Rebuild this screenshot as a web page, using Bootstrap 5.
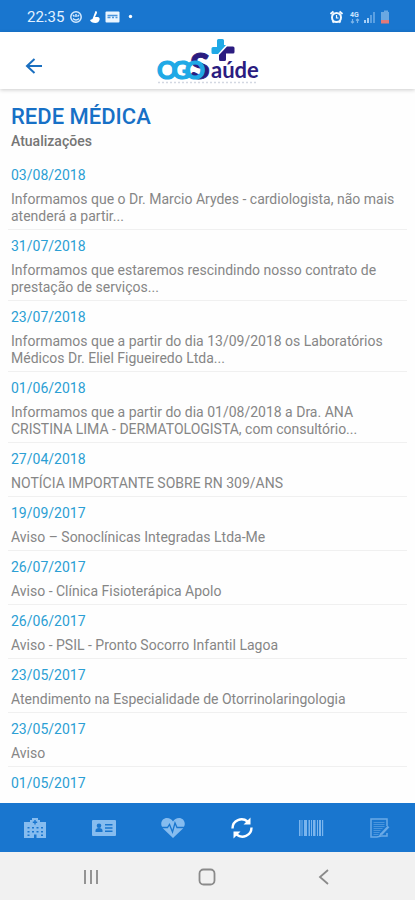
<!DOCTYPE html>
<html lang="pt-BR">
<head>
<meta charset="utf-8">
<meta name="viewport" content="width=device-width, initial-scale=1">
<title>OGO Saúde - Rede Médica</title>
<link href="https://cdn.jsdelivr.net/npm/bootstrap@5.3.0/dist/css/bootstrap.min.css" rel="stylesheet">
<style>
body { font-family: Roboto, "Liberation Sans", sans-serif; background: #fefefe; }
svg { display: block; }
.brand-bg { background: #1976cf; }
.status { height: 32px; padding: 2px 25px 0 27px; font-size: 15px; line-height: 20px; color: #e2f1ff; }
.topbar { height: 57px; background: #fff; box-shadow: 0 1px 4px rgba(0,0,0,.2); display: grid; grid-template-columns: 1fr auto 1fr; z-index: 1; }
.back { margin-left: 24px; padding: 10px 0 0; color: #1a6fc0; }
.content { padding: 14px 8px 0; }
.page-title { font-size: 22px; line-height: 28px; font-weight: 500; color: #1770c6; padding-left: 3px; }
.page-sub { font-size: 14px; line-height: 20px; font-weight: 500; color: #757575; padding-left: 3px; }
.notice { padding: 6px 3px 4px; border-bottom: 1px solid #f0f0f0; font-size: 14px; }
.notice time { display: block; line-height: 20px; color: #2b9fd4; }
.notice p { margin: 6px 0 0; line-height: 17px; color: #868686; }
.tabs { height: 49px; }
.tabs .btn, .sysnav .btn { padding: 0; border: 0; border-radius: 0; }
.tabs .btn { color: #86bcef; }
.tabs .btn.current { color: #fff; }
.sysnav { height: 48px; background: #f1f1f1; padding: 2px 33px 0; }
.sysnav .btn { color: #8a8a8a; }
</style>
<script src="https://cdn.jsdelivr.net/npm/bootstrap@5.3.0/dist/js/bootstrap.bundle.min.js"></script>
</head>
<body class="vh-100 d-flex flex-column overflow-hidden">

<div class="status brand-bg d-flex align-items-center justify-content-between flex-shrink-0">
  <div class="d-flex align-items-center">
    <span>22:35</span>
    <svg class="ms-1" width="68" height="16" viewBox="0 0 68 16" aria-hidden="true">
      <g fill="none" stroke="#d5eaff" stroke-width="1.5"><circle cx="8" cy="8" r="5.2"/><path d="M5 6l1.500 1.500M11 6L9.500 7.500M5 9.500q3 3 6 0M8 5v3"/></g>
      <path fill="#fff" d="M27.500 2c1.500 0 2 1.500 1 3l-1.500 3h2.500c2 0 2.500 1.500 2 3-.6 2-2 3-4 3-3 0-5-1-5.500-3l2.500-1z"/>
      <rect x="37.500" y="2.500" width="14" height="11" rx="1" fill="#eaf5ff"/>
      <path stroke="#4a95dc" stroke-width="1.300" fill="none" d="M39.500 6.500h10M39.500 8.500h3M44 8.500h2M47.500 8.500h2"/>
      <circle cx="62.500" cy="7.500" r="1.700" fill="#fff"/>
    </svg>
  </div>
  <svg width="62" height="16" viewBox="0 0 62 16" aria-hidden="true">
    <g fill="none" stroke="#f2f9ff" stroke-width="2"><circle cx="8.500" cy="8.500" r="4.500"/><path d="M2.500 5l3-2.500M14.500 5l-3-2.500M4.500 13.500l1.500-1.500M12.500 13.500L11 12"/><path stroke-width="1.200" d="M8.500 6v3h2"/></g>
    <text x="22" y="8" font-size="7" font-weight="700" fill="#cde6ff">4G</text>
    <path stroke="#7db5ea" stroke-width="1.200" fill="none" d="M24.500 10v4M23 12.500l1.500 1.500L26 12.500M29.500 14v-4M28 11.500l1.500-1.500 1.500 1.500"/>
    <path fill="#a8d0f6" d="M36 11h2v3h-2zM39 9h2v5h-2z"/><path fill="#5ba0e2" d="M42 6h2v8h-2zM45 3h2v11h-2z"/>
    <path fill="#6aa8e2" d="M54 3h2V1.500h4V3h1v8h-8V3z"/><path fill="#e07a7a" d="M53 11h8v3.500h-8z"/>
  </svg>
</div>

<header class="topbar flex-shrink-0 position-relative">
  <button type="button" class="btn back border-0 me-auto" aria-label="Voltar">
    <svg width="20" height="20" viewBox="0 0 20 20" fill="none" stroke="currentColor" stroke-width="2"><path d="M18 10H3.500M10.500 3L3 10l7.500 7"/></svg>
  </button>
  <svg width="104" height="56" viewBox="0 0 104 56" role="img" aria-label="OGO Saúde" font-family="Lato, sans-serif">
    <path fill="#20a9e6" d="M61 8.500q0-1.500 1.500-1.500h4q1.500 0 1.500 1.500V13h2l-8 9h-5q-1.500 0-1.500-1.500v-4q0-1.500 1.500-1.500h4z"/>
    <path fill="#2b1c80" d="M71 14.500h6q1.500 0 1.500 1.500v4q0 1.500-1.500 1.500h-7v6q0 1.500-1.500 1.500h-4q-1.500 0-1.500-1.500V23z"/>
    <text x="34" y="47" font-size="36" font-weight="900" fill="#2b1c80" stroke="#2b1c80">S</text>
    <g font-size="25" font-weight="700" fill="#20a9e6" stroke="#20a9e6" stroke-width="1.200">
      <text x="1" y="47">O</text><text x="16" y="47">G</text><text x="29" y="47">O</text>
    </g>
    <text x="55" y="46" font-size="22" font-weight="700" fill="#2b1c80">aúde</text>
    <path d="M2 50.500h100" stroke="#d3d8e2" stroke-width="1.500" stroke-dasharray="2 2"/>
  </svg>
</header>

<main class="content flex-grow-1 overflow-hidden">
  <h1 class="page-title mb-0">REDE MÉDICA</h1>
  <h2 class="page-sub mb-2">Atualizações</h2>
  <section aria-label="Atualizações">
    <article class="notice"><time>03/08/2018</time><p>Informamos que o Dr. Marcio Arydes - cardiologista, não mais atenderá a partir...</p></article>
    <article class="notice"><time>31/07/2018</time><p>Informamos que estaremos rescindindo nosso contrato de prestação de serviços...</p></article>
    <article class="notice"><time>23/07/2018</time><p>Informamos que a partir do dia 13/09/2018 os Laboratórios Médicos Dr. Eliel Figueiredo Ltda...</p></article>
    <article class="notice"><time>01/06/2018</time><p>Informamos que a partir do dia 01/08/2018 a Dra. ANA CRISTINA LIMA - DERMATOLOGISTA, com consultório...</p></article>
    <article class="notice"><time>27/04/2018</time><p>NOTÍCIA IMPORTANTE SOBRE RN 309/ANS</p></article>
    <article class="notice"><time>19/09/2017</time><p>Aviso – Sonoclínicas Integradas Ltda-Me</p></article>
    <article class="notice"><time>26/07/2017</time><p>Aviso - Clínica Fisioterápica Apolo</p></article>
    <article class="notice"><time>26/06/2017</time><p>Aviso - PSIL - Pronto Socorro Infantil Lagoa</p></article>
    <article class="notice"><time>23/05/2017</time><p>Atendimento na Especialidade de Otorrinolaringologia</p></article>
    <article class="notice"><time>23/05/2017</time><p>Aviso</p></article>
    <article class="notice border-0"><time>01/05/2017</time></article>
  </section>
</main>

<nav class="tabs brand-bg d-flex flex-shrink-0" aria-label="Menu principal">
  <button type="button" class="btn col d-flex align-items-center justify-content-center" aria-label="Hospitais">
    <svg width="24" height="22" viewBox="0 0 24 22"><path fill="currentColor" d="M1 5h6V3h2V1h6v2h2v2h6v16H1z"/><path fill="#1976cf" d="M11.300 3h1.400v1.500h1.500v1.400h-1.500v1.500h-1.400V5.900H9.800V4.500h1.500zM4.500 10h2v1.500h-2zM9 10h2v1.500H9zM13.500 10h2v1.500h-2zM18 10h2v1.500h-2zM4.500 14h2v1.500h-2zM9 14h2v1.500H9zM13.500 14h2v1.500h-2zM18 14h2v1.500h-2zM4.500 17.500h2V19h-2zM11 17.500h2.500V21H11zM18 17.500h2V19h-2z"/></svg>
  </button>
  <button type="button" class="btn col d-flex align-items-center justify-content-center" aria-label="Carteirinha">
    <svg width="24" height="22" viewBox="0 0 24 22"><rect y="3" width="24" height="16" rx="1" fill="currentColor"/><g fill="#1976cf"><circle cx="7" cy="8.700" r="2.300"/><path d="M3.500 15v-1.500q0-2.500 3.500-2.500t3.500 2.500V15zM13 7h7.500v1.500H13zM13 10.200h7.500v1.500H13zM13 13.400h7.500v1.500H13z"/></g></svg>
  </button>
  <button type="button" class="btn col d-flex align-items-center justify-content-center" aria-label="Saúde">
    <svg width="26" height="22" viewBox="0 0 26 22"><path fill="currentColor" d="M13 21L3 11.500C-1 6 2.500 1 7 1q4 0 6 3.500Q15 1 19 1c4.500 0 8 5 4 10.500z"/><path fill="none" stroke="#1976cf" stroke-width="1.300" d="M0 10.500h7.500l2-3 3 7.500 2.500-9 2 4.500h9"/></svg>
  </button>
  <button type="button" class="btn current col d-flex align-items-center justify-content-center" aria-label="Atualizar" aria-current="page">
    <svg width="24" height="24" viewBox="0 0 24 24"><g fill="none" stroke="currentColor" stroke-width="2.400"><path d="M2.500 12.500C2.500 4 12 1 17.500 5.500"/><path d="M21.500 11.500C21.500 20 12 23 6.500 18.500"/></g><path fill="currentColor" d="M20.500 1.500v7h-7zM3.500 22.500v-7h7z"/></svg>
  </button>
  <button type="button" class="btn col d-flex align-items-center justify-content-center" aria-label="Código de barras">
    <svg width="26" height="22" viewBox="0 0 26 22"><path fill="currentColor" opacity=".9" d="M1 3h1.500v16H1zM3.500 3h1v16h-1zM6 3h3v16H6zM10.500 3H12v16h-1.500zM13 3h1v16h-1zM15 3h2.500v16H15zM19 3h1v16h-1zM21 3h2v16h-2zM24 3h1.200v16H24z"/></svg>
  </button>
  <button type="button" class="btn col d-flex align-items-center justify-content-center" aria-label="Formulário">
    <svg width="22" height="22" viewBox="0 0 22 22" fill="none" stroke="currentColor" opacity=".75"><path stroke-width="1.500" d="M18 9V2H2v18h6l4-1h6v-3"/><path opacity=".6" d="M4.500 5.500h11M4.500 7.500h11M4.500 9.500h11M4.500 11.500h9M4.500 13.500h7M4.500 15.500h6M4.500 17.500h5"/><path stroke-width="2.500" d="M19.500 9.500L12 17.500"/><path stroke-width="1.500" d="M12 16.500l-1.500 3"/></svg>
  </button>
</nav>

<div class="sysnav d-flex align-items-center flex-shrink-0">
  <button type="button" class="btn flex-fill d-flex justify-content-center" aria-label="Aplicativos recentes">
    <svg width="18" height="18" viewBox="0 0 18 18" fill="none" stroke="currentColor" stroke-width="1.800"><path d="M3 2v14M9 2v14M15 2v14"/></svg>
  </button>
  <button type="button" class="btn flex-fill d-flex justify-content-center" aria-label="Início">
    <svg width="18" height="18" viewBox="0 0 18 18" fill="none" stroke="currentColor" stroke-width="1.800"><rect x="1.500" y="1.500" width="15" height="15" rx="4"/></svg>
  </button>
  <button type="button" class="btn flex-fill d-flex justify-content-center" aria-label="Voltar do sistema">
    <svg width="18" height="18" viewBox="0 0 18 18" fill="none" stroke="currentColor" stroke-width="1.800"><path d="M13 2L5 9l8 7"/></svg>
  </button>
</div>
</body>
</html>
